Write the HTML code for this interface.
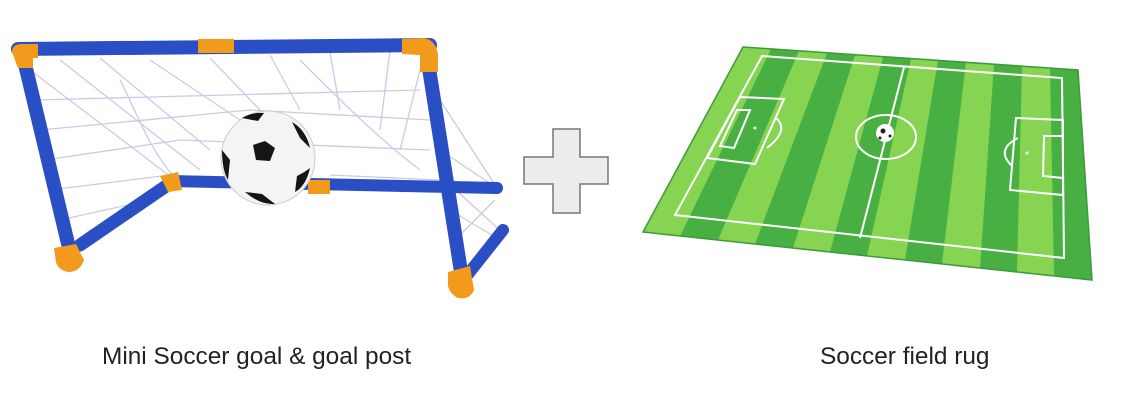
<!DOCTYPE html>
<html><head><style>
body{margin:0;width:1141px;height:408px;background:#fff;overflow:hidden;position:relative;font-family:"Liberation Sans",sans-serif}
.t{position:absolute;font-size:24.4px;color:#222;white-space:nowrap}
</style></head><body>
<svg width="1141" height="408" style="position:absolute;left:0;top:0">
<g stroke="#c9cbe6" stroke-width="1.3" fill="none">
<path d="M30 70 L175 180 M60 60 L200 170 M100 58 L210 150 M150 60 L240 120 M210 58 L260 110 M270 55 L300 110 M330 52 L340 110 M390 50 L380 130 M420 70 L400 150"/>
<path d="M35 100 L420 90 M40 130 L250 110 L430 120 M45 160 L180 140 L430 150 M50 190 L170 175 M330 175 L440 180 M60 220 L150 200"/>
<path d="M440 150 L500 190 M445 180 L505 235 M450 210 L500 240 M455 240 L495 200 M440 100 L495 185"/>
<path d="M120 80 C140 120 150 150 175 178 M300 60 C340 100 380 140 420 170"/>
</g>
<g stroke-linecap="round" fill="none">
<line x1="170" y1="181" x2="497" y2="188" stroke="#2a4fc4" stroke-width="12"/>
<line x1="80" y1="245" x2="172" y2="182" stroke="#2a4fc4" stroke-width="13"/>
<line x1="24" y1="60" x2="70" y2="252" stroke="#2a4fc4" stroke-width="14"/>
<line x1="18" y1="49" x2="430" y2="45" stroke="#2a4fc4" stroke-width="14"/>
<line x1="428" y1="62" x2="462" y2="278" stroke="#2a4fc4" stroke-width="14"/>
<line x1="465" y1="278" x2="503" y2="230" stroke="#2a4fc4" stroke-width="12"/>
</g>
<g fill="#f29a1c">
<path d="M12 52 Q12 44 22 44 L38 44 L38 58 L33 58 L33 68 L18 68 Z"/>
<rect x="198" y="39" width="36" height="14"/>
<path d="M402 39 L424 38 Q436 40 438 55 L438 72 L420 72 L420 55 L402 54 Z"/>
<path d="M54 248 L76 244 L84 260 Q80 272 68 272 Q58 270 56 262 Z"/>
<path d="M160 176 L178 172 L182 190 L168 192 Z"/>
<rect x="308" y="180" width="22" height="14"/>
<path d="M448 272 L470 266 L474 290 Q470 300 458 298 Q450 294 448 286 Z"/>
</g>
<circle cx="268" cy="158" r="47" fill="#f4f4f4" stroke="#ccc" stroke-width="1"/>
<g fill="#151515">
<polygon points="253,145 265,141 275,148 270,161 256,160"/>
<path d="M242 118 Q252 112 264 113 L258 121 Z"/>
<path d="M292 122 Q306 130 310 148 L300 138 Z"/>
<path d="M222 150 Q222 170 228 180 L230 160 Z"/>
<path d="M245 192 Q260 205 275 204 L262 194 Z"/>
<path d="M297 176 Q305 172 310 168 Q306 186 295 192 Z"/>
</g>
<path d="M553 129 H580 V157 H608 V184 H580 V213 H553 V184 H524 V157 H553 Z" fill="#ececec" stroke="#777" stroke-width="1.5"/>
<polygon points="743,47 1078,70 1092,280 643,232" fill="#86d452"/>
<g fill="#48b043">
<polygon points="771,49 799,51 718,240 680,236"/>
<polygon points="827,53 855,55 793,248 755,244"/>
<polygon points="883,57 911,59 867,256 830,252"/>
<polygon points="938,60 966,62 942,264 905,260"/>
<polygon points="994,64 1022,66 1017,272 980,268"/>
<polygon points="1050,68 1078,70 1092,280 1054,276"/>
</g>
<polygon points="743,47 1078,70 1092,280 643,232" fill="none" stroke="#3d9a3a" stroke-width="1.5"/>
<g stroke="#fff" stroke-width="2" fill="none">
<polygon points="762,56 1062,78 1064,258 675,215"/>
<line x1="904" y1="67" x2="860" y2="238"/>
<ellipse cx="886" cy="137" rx="30" ry="22"/>
<polygon points="740,97 784,99 755,164 707,158"/>
<polygon points="737,110 750,110 734,148 720,146"/>
<path d="M776 118 Q790 130 767 148"/>
<polygon points="1016,118 1063,120 1063,195 1010,190"/>
<polygon points="1044,136 1063,136 1063,178 1043,176"/>
<path d="M1018 138 Q995 150 1012 166"/>
</g>
<circle cx="755" cy="128" r="1.5" fill="#fff"/>
<circle cx="1027" cy="153" r="1.5" fill="#fff"/>
<circle cx="885" cy="133" r="9" fill="#fff"/>
<circle cx="883" cy="131" r="2.5" fill="#222"/><circle cx="890" cy="136" r="1.5" fill="#222"/><circle cx="880" cy="138" r="1.5" fill="#222"/>
</svg>
<div class="t" style="left:102px;top:343px">Mini Soccer goal &amp; goal post</div>
<div class="t" style="left:820px;top:343px">Soccer field rug</div>
</body></html>
